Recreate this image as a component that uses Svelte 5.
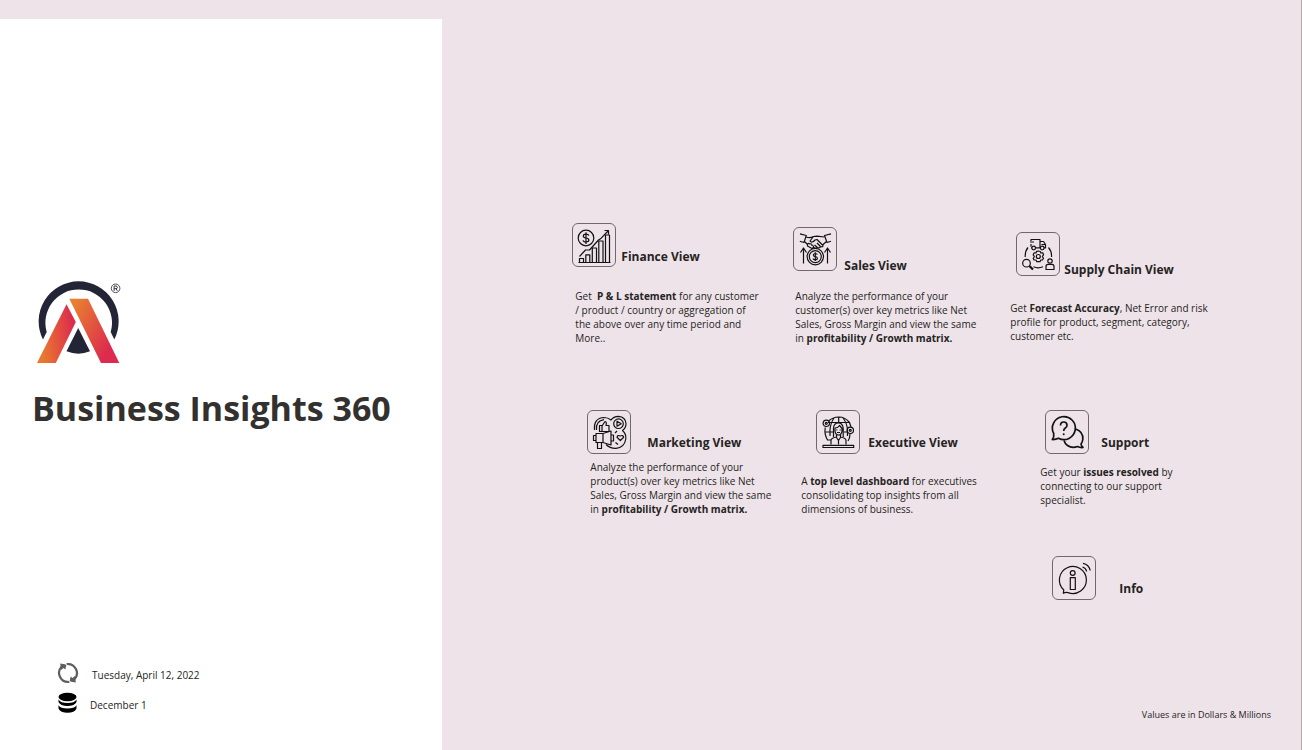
<script>
  const plain = (t) => ({ t });
  const bold = (t) => ({ t, b: true });

  const cards = [
    {
      id: 'finance',
      title: 'Finance View',
      lines: [
        [plain('Get  '), bold('P & L statement'), plain(' for any customer')],
        [plain('/ product / country or aggregation of')],
        [plain('the above over any time period and')],
        [plain('More..')],
      ],
    },
    {
      id: 'sales',
      title: 'Sales View',
      lines: [
        [plain('Analyze the performance of your')],
        [plain('customer(s) over key metrics like Net')],
        [plain('Sales, Gross Margin and view the same')],
        [plain('in '), bold('profitability / Growth matrix.')],
      ],
    },
    {
      id: 'supply',
      title: 'Supply Chain View',
      lines: [
        [plain('Get '), bold('Forecast Accuracy'), plain(', Net Error and risk')],
        [plain('profile for product, segment, category,')],
        [plain('customer etc.')],
      ],
    },
    {
      id: 'marketing',
      title: 'Marketing View',
      lines: [
        [plain('Analyze the performance of your')],
        [plain('product(s) over key metrics like Net')],
        [plain('Sales, Gross Margin and view the same')],
        [plain('in '), bold('profitability / Growth matrix.')],
      ],
    },
    {
      id: 'executive',
      title: 'Executive View',
      lines: [
        [plain('A '), bold('top level dashboard'), plain(' for executives')],
        [plain('consolidating top insights from all')],
        [plain('dimensions of business.')],
      ],
    },
    {
      id: 'support',
      title: 'Support',
      lines: [
        [plain('Get your '), bold('issues resolved'), plain(' by')],
        [plain('connecting to our support')],
        [plain('specialist.')],
      ],
    },
    { id: 'info', title: 'Info', lines: [] },
  ];
</script>

<div class="page">
  <aside class="brand">
    <svg class="logo" viewBox="0 0 86 86" role="img" aria-label="Logo">
      <defs>
        <linearGradient id="legL" x1="0" y1="0.6" x2="1" y2="0.4">
          <stop offset="0.1" stop-color="#e9782f" />
          <stop offset="0.95" stop-color="#dc2b4e" />
        </linearGradient>
        <linearGradient id="legR" x1="0" y1="0.1" x2="1" y2="0.8">
          <stop offset="0.05" stop-color="#e9802f" />
          <stop offset="0.85" stop-color="#dc2b4e" />
        </linearGradient>
      </defs>
      <path
        d="M7 59.500A40 40 0 1 1 78.300 59.500L74.700 52A33.300 33.300 0 1 0 10.700 52Z"
        fill="#232536"
      />
      <path d="M42.200 48L54 71.300Q42.500 76 30.500 71.300Z" fill="#232536" />
      <path d="M1 83L30.500 24.300L39.800 42L19.800 83Z" fill="url(#legL)" />
      <path d="M33.300 18.700H52L83.300 83H65Z" fill="url(#legR)" />
      <circle cx="79.600" cy="8.300" r="4.300" fill="none" stroke="#232536" stroke-width="0.8" />
      <path d="M78.100 10.900V6H80a1.300 1.300 0 0 1 0 2.700H78.100M80 8.700l1.400 2.200" fill="none" stroke="#232536" stroke-width="0.9" />
    </svg>
    <h1>Business Insights 360</h1>
    <ul class="meta">
      <li>
        <svg viewBox="0 0 22 22" aria-hidden="true">
          <g fill="none" stroke="#605e5c" stroke-width="2.200">
            <path d="M9.500 2.200A9 9 0 0 1 17.200 17.500" />
            <path d="M12.500 19.800A9 9 0 0 1 4.800 4.500" />
          </g>
          <path d="M3.200 1.500L9.500 2.500L8.300 7.500L6.500 6L4 8ZM18.800 20.500L12.500 19.500L13.700 14.500L15.500 16L18 14Z" fill="#605e5c" />
          <path d="M8.800 0V2.500L11.500 4M13.200 22V19.500L10.500 18" fill="none" stroke="#fff" stroke-width="0.800" />
        </svg>
        <span>Tuesday, April 12, 2022</span>
      </li>
      <li class="period">
        <svg viewBox="0 0 22 22" aria-hidden="true">
          <ellipse cx="10.500" cy="5" rx="9" ry="4.200" />
          <path d="M1.500 7.500Q3.500 11 10.500 11T19.500 7.500V10Q17.500 14 10.500 14T1.500 10Z" />
          <path d="M1.500 13.200Q3.500 16.500 10.500 16.500T19.500 13.200V16.500Q17.500 20.800 10.500 20.800T1.500 16.500Z" />
        </svg>
        <span>December 1</span>
      </li>
    </ul>
  </aside>

  <main>
    <div class="views">
      {#each cards as card (card.id)}
        <section class="card {card.id}">
          <header>
            <button type="button" aria-label={card.title}>
              <svg viewBox="0 0 44 44" aria-hidden="true">
                {#if card.id === 'finance'}
                  <circle cx="14" cy="15" r="7.800" />
                  <path d="M16.800 12.600Q16.500 11.200 14 11.200T11.300 13Q11.300 14.800 14 15T16.900 17.100Q16.900 19 14 19T11.200 17.300M14 9.300V21" />
                  <path d="M7.500 39.500V35.500H11.500V39.500M13.800 39.500V31.800H17.800V39.500M20.300 39.500V25H24.500V39.500M26.800 39.500V18H31V39.500M33.500 39.500V12H37.500V39.500M6.500 39.500H38.500" />
                  <path d="M7.500 33.500L13.500 27H17.500L26.500 17L28.500 15.800L36.500 7.500M32.500 7.500H36.500V11.500" />
                {:else if card.id === 'sales'}
                  <circle cx="22.300" cy="29.600" r="8.200" />
                  <circle cx="22.300" cy="29.600" r="6" />
                  <path d="M24.300 27.600Q24 26.500 22.300 26.500T20.300 28Q20.300 29.400 22.300 29.600T24.400 31.200Q24.400 32.700 22.300 32.700T20.200 31.400M22.300 25.200V34" />
                  <path d="M10.500 36.500V21.500M7.500 25.500L10.500 21L13.500 25.500M34.500 36.500V21.500M31.500 25.500L34.500 21L37.500 25.500" />
                  <path d="M7 6.800L13.300 8.500L11 15.500L6.800 14.200M38 6.800L31.500 8.500L34 15.500L38 14.200" />
                  <path d="M13 10Q17 11.500 20.500 9.500L24 9.200L31.500 10M11.500 14.500L14.500 17.500M33.500 14.500L29.500 18M20.500 9.500L17 14Q19 16.500 22 13L24 12.500L30 18.500Q30 20.500 27.500 19.500L24 16M27.500 19.500Q27 21.500 24.500 20.500L21.500 18M24.500 20.500Q23 22 21 20.500M14.500 17.500Q15 15.500 17 17Q19 16.500 19 18.500Q21 18.500 20.500 20.500L19 21.500L14.500 19Z" />
                {:else if card.id === 'supply'}
                  <path d="M15 14.800V12M15 9V7.500H24V15.500M14 10H18M24 9.500H27.500L29.500 12.500V15.800H28M24.200 15.800H19.500M16 15.800H15M25.500 12.500H29.500" />
                  <circle cx="17.700" cy="16" r="1.800" />
                  <circle cx="26.200" cy="16" r="1.800" />
                  <path d="M22.300 19L24.300 19.500L24.800 21L26.800 20.800L27.500 22.800L26.300 24.500L27.500 26.300L26.500 28L24.800 28L24 29.700H20.800L20 28L18 28L17.200 26.300L18.400 24.500L17.200 22.800L18.200 20.800L20 21L20.600 19.300Z" />
                  <circle cx="22.300" cy="24.500" r="2" />
                  <path d="M12 15.500Q9 19 9.200 25M32.500 15.500Q36 19.500 35.500 25M17.500 34.800Q22 36.800 27 34.800" />
                  <circle cx="10.500" cy="31.200" r="3.800" />
                  <path d="M13.500 34L17 37.500" stroke-width="2.200" />
                  <circle cx="34" cy="29" r="2.200" />
                  <path d="M30 37.500V34.500Q30 32.300 32 32.300H36Q38 32.300 38 34.500V37.500Z" />
                {:else if card.id === 'marketing'}
                  <path d="M7.500 20Q6.500 8 17 7.500Q21 7.500 24 10Q26.500 6.500 31.500 6.300Q38.500 6.800 39 13.500Q39 18 35.500 20.500Q39.500 24 38.800 29Q37.500 37.500 29 38.300Q23 38.500 19 34.500M9.500 20Q8.500 11 17 9.700" />
                  <circle cx="31.500" cy="13.700" r="4.800" />
                  <path d="M30 11.200V16.200L34.200 13.700Z" />
                  <path d="M12.500 15.500H15V21.500H12.500ZM15 16L18 11.500Q20 12 19 15.500H22V21.500H15" />
                  <path d="M33.300 30.500L30 27.300Q30.500 24.500 33.300 26Q36 24.500 36.700 27.300Z" />
                  <path d="M9 23.500H16L24 21V35L16 32.500H9ZM16 23.500V32.500M9 25.500H6.500V30.500H9M24 25H26.500V31H24M10.500 32.500V38.500H14.500V32.500M28 23L30 21M28.500 32.500L31 34.500" />
                {:else if card.id === 'executive'}
                  <path d="M12.500 11Q16.500 7.200 22.700 7T33.500 12.500L35 17M9.300 17.500Q8 24 11.500 30H15M34 24Q34 28 32 31M22.700 7V12M18 8Q14.500 13 14 20V26M27 8Q31 13 31.500 20V26M12 12.500H33M9 22H17M28 22H31" />
                  <circle cx="10.300" cy="13.300" r="3.200" />
                  <circle cx="10.300" cy="13.300" r="1" />
                  <circle cx="34.300" cy="20.300" r="3.200" />
                  <circle cx="34.300" cy="20.300" r="1" />
                  <path d="M17.500 27V18Q18 12.800 22.300 12.800T27.200 18V27M19 18Q22 18 23.500 15.500L26 18.500V21Q25.500 25 22.500 25T19 21ZM20.800 19.500V20.500M24.200 19.500V20.500M21 22.500H24M20.500 25V27.500L22.500 30.500L24.500 27.500V25M15 34.500V30.500Q15 28 20.500 27M30 34.500V30.500Q30 28 24.500 27M22.500 30.500V34.500" />
                  <path d="M7 35.300H37.700V37.500H7Z" />
                {:else if card.id === 'support'}
                  <g stroke-width="1.700">
                    <path d="M8.700 23.500A11.500 11.500 0 1 1 13.500 28.300Q10.500 29.700 7.300 29.500Q9.300 27 8.700 23.500Z" />
                    <path d="M30.500 19Q38.500 21.500 37.800 29.500Q37.500 32 36 34Q36.200 36 38 37.500Q35 37.800 32.500 36.500Q27 38.500 22.500 35.500Q20 33.800 19 30.500" />
                    <path d="M15.500 15.500Q15.500 12 18.700 12T22 15.200Q22 17 20.300 18Q18.700 19 18.700 21" />
                  </g>
                  <circle class="solid" cx="18.700" cy="24.200" r="1" />
                {:else}
                  <path d="M11.800 34A13.500 13.500 0 1 1 16 36.600Q13.500 36 11.300 37.300Z" />
                  <circle cx="20.700" cy="17" r="2.400" />
                  <path d="M18.300 21.700H23.300V33.500H18.300ZM30.500 11Q34 12 34.700 15.500M31 7.300Q37 8.500 38.200 14.500" />
                {/if}
              </svg>
            </button>
            <h2>{card.title}</h2>
          </header>
          {#if card.lines.length}
            <p>
              {#each card.lines as line}
                <span class="line">{#each line as part}{#if part.b}<b>{part.t}</b>{:else}{part.t}{/if}{/each}</span>
              {/each}
            </p>
          {/if}
        </section>
      {/each}
    </div>
    <footer>Values are in Dollars &amp; Millions</footer>
  </main>
</div>

<style>
  :global(body) {
    margin: 0;
    background: #eee3e8;
  }
  .page {
    box-sizing: border-box;
    display: flex;
    min-height: 100vh;
    border-right: 1px solid #b3acaf;
    font-family: 'Open Sans', 'Noto Sans', sans-serif;
    font-size: 10px;
    line-height: 14px;
    color: #252423;
  }
  .brand {
    box-sizing: border-box;
    flex: 0 0 34%;
    display: flex;
    flex-direction: column;
    margin-top: 19px;
    padding: 261px 16px 36px 32px;
    background: #fff;
  }
  .logo {
    width: 86px;
    height: 86px;
    margin-left: 4px;
  }
  h1 {
    margin: 18px 0 0;
    font-size: 34px;
    line-height: 48px;
    font-weight: 700;
    white-space: nowrap;
    color: #323130;
  }
  .meta {
    display: flex;
    flex-direction: column;
    gap: 8px;
    margin: auto 0 0;
    padding: 0 0 0 25px;
    list-style: none;
  }
  .meta li {
    display: flex;
    align-items: flex-end;
    gap: 13px;
  }
  .meta .period {
    gap: 11px;
  }
  .meta svg {
    width: 22px;
    height: 22px;
  }
  .meta span {
    padding-bottom: 2px;
  }
  main {
    flex: 1;
    display: flex;
    flex-direction: column;
    padding: 223px 30px 28px 130px;
  }
  .views {
    display: grid;
    grid-template-columns: 221px 217px 1fr;
    grid-template-rows: 187px 146px auto;
  }
  header {
    display: flex;
    align-items: flex-start;
    gap: 5px;
  }
  button {
    flex: none;
    width: 44px;
    height: 44px;
    padding: 0;
    border: 1px solid #6f696c;
    border-radius: 6px;
    background: transparent;
    cursor: pointer;
  }
  button svg {
    display: block;
    width: 44px;
    height: 44px;
    margin: -1px;
    fill: none;
    stroke: #111;
    stroke-width: 1.2;
    stroke-linejoin: round;
  }
  .solid {
    fill: #111;
    stroke: none;
  }
  h2 {
    margin: 24px 0 0;
    font-size: 12px;
    line-height: 18px;
    font-weight: 700;
    white-space: nowrap;
  }
  p {
    margin: 22px 0 0 2px;
  }
  .line {
    display: block;
    white-space: pre;
  }
  .finance h2 {
    margin-top: 25px;
  }
  .finance p {
    margin-left: 3px;
  }
  .sales {
    padding-top: 4px;
  }
  .sales header {
    gap: 7px;
  }
  .sales h2 {
    margin-top: 30px;
  }
  .supply h2 {
    margin-top: 29px;
  }
  .sales p {
    margin-top: 14px;
  }
  .supply {
    padding-top: 9px;
  }
  .supply header {
    padding-left: 6px;
    gap: 4px;
  }
  .supply p {
    margin: 22px 0 0;
  }
  .marketing {
    padding-left: 15px;
  }
  .marketing header {
    gap: 16px;
  }
  .marketing p {
    margin: 6px 0 0 3px;
  }
  .executive {
    padding-left: 8px;
  }
  .executive header {
    padding-left: 15px;
    gap: 8px;
  }
  .executive p {
    margin: 20px 0 0;
  }
  .support {
    padding-left: 30px;
  }
  .support header {
    padding-left: 5px;
    gap: 12px;
  }
  .support p {
    margin: 11px 0 0;
  }
  .info {
    grid-column: 3;
    padding-left: 42px;
  }
  .info header {
    gap: 23px;
  }
  footer {
    margin-top: auto;
    font-size: 9px;
    text-align: right;
  }
</style>
